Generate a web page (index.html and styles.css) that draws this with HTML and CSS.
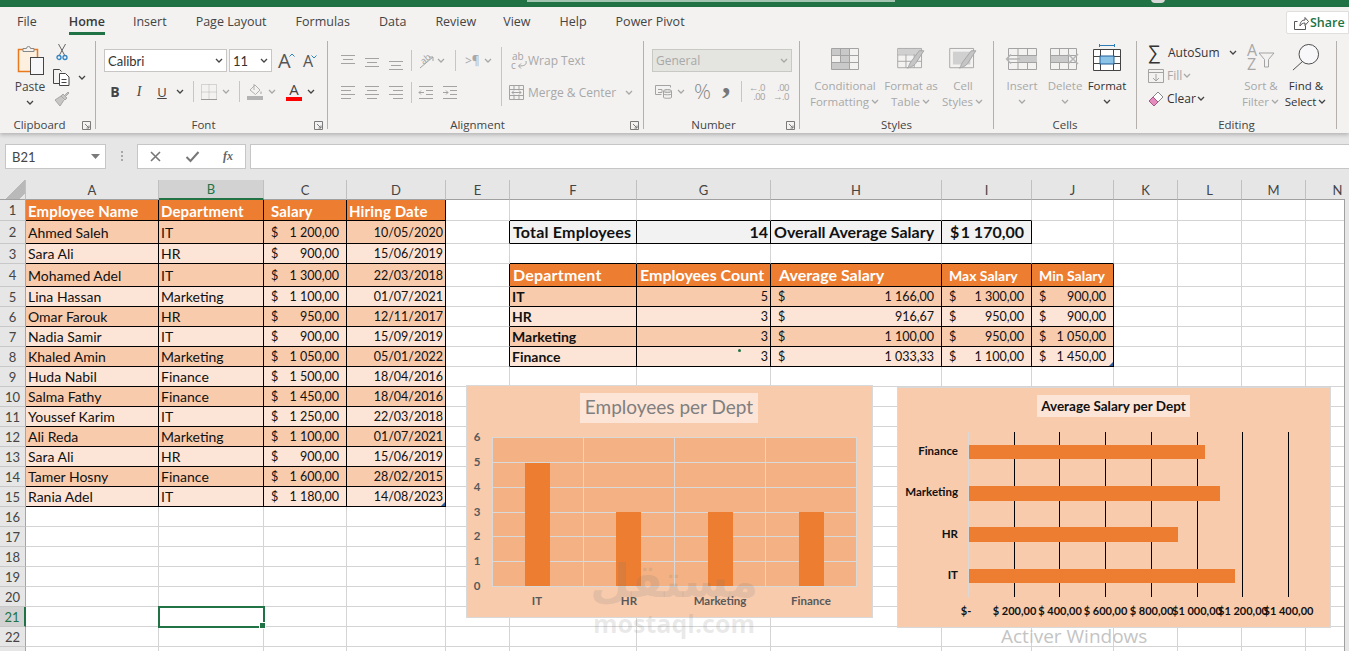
FILE: index.html
```html
<!DOCTYPE html>
<html lang="en">
<head>
<meta charset="utf-8">
<title>Employees - Excel</title>
<link rel="stylesheet" href="styles.css">
</head>
<body>
<svg class="defs" xmlns="http://www.w3.org/2000/svg">
  <symbol id="chev" viewBox="0 0 10 6"><path d="M2 1l3 3 3-3" fill="none" stroke="currentColor" stroke-width="1.3"/></symbol>
  <symbol id="launch" viewBox="0 0 9 9"><path d="M.5 8.500V.5h8v8zM3 3l4 4M7 4.500V7H4.500" fill="none" stroke="#7a7a7a" stroke-width="1"/></symbol>
  <symbol id="al-top" viewBox="0 0 16 20"><path d="M1 4.500h14M3 8.500h10M1 12.500h14" fill="none" stroke="#a3a3a3"/></symbol>
  <symbol id="al-mid" viewBox="0 0 16 20"><path d="M1 7.500h14M3 11.500h10M1 15.500h14" fill="none" stroke="#a3a3a3"/></symbol>
  <symbol id="al-bot" viewBox="0 0 16 20"><path d="M1 10.500h14M3 14.500h10M1 18.500h14" fill="none" stroke="#a3a3a3"/></symbol>
  <symbol id="al-left" viewBox="0 0 16 16"><path d="M1 1.500h14M1 5.500h10M1 9.500h14M1 13.500h10" fill="none" stroke="#a3a3a3"/></symbol>
  <symbol id="al-center" viewBox="0 0 16 16"><path d="M1 1.500h14M3 5.500h10M1 9.500h14M3 13.500h10" fill="none" stroke="#a3a3a3"/></symbol>
  <symbol id="al-right" viewBox="0 0 16 16"><path d="M1 1.500h14M5 5.500h10M1 9.500h14M5 13.500h10" fill="none" stroke="#a3a3a3"/></symbol>
  <symbol id="grid-base" viewBox="0 0 28 22"><path d="M.5.500h27v21H.5zM.5 7.500h27M.5 14.500h27M9.500.5v21M18.500.5v21" fill="none" stroke="#a3a3a3"/></symbol>
</svg>

<header class="titlebar"><div class="searchbar"></div><div class="profile"></div></header>

<section class="ribbon">
  <nav class="tabs">
    <span class="tab">File</span>
    <span class="tab active">Home</span>
    <span class="tab">Insert</span>
    <span class="tab">Page Layout</span>
    <span class="tab">Formulas</span>
    <span class="tab">Data</span>
    <span class="tab tab-rev">Review</span>
    <span class="tab">View</span>
    <span class="tab">Help</span>
    <span class="tab">Power Pivot</span>
    <button class="share">
      <svg width="16" height="16" viewBox="0 0 16 16"><path d="M1.500 6.500v8h11v-4M1.500 6.500h3M7 11c0-4 2-6 5-6V2.500l3.500 4-3.500 4V8c-2 0-4 1-5 3z" fill="none" stroke="#555"/></svg>
      <span>Share</span>
    </button>
  </nav>
  <div class="groups">

    <div class="group g-clip">
      <div class="group-body clip-body">
        <div class="paste">
          <svg width="30" height="32" viewBox="0 0 30 32"><rect x="3.500" y="5.500" width="19" height="22" fill="#fdf0de" stroke="#e8791c" stroke-width="1.500"/><path d="M8 7.500v-3h3.500a2 2 0 0 1 4 0H19v3z" fill="#f3f2f1" stroke="#8a8886"/><rect x="15.500" y="13.500" width="13" height="17" fill="#f7f6f9" stroke="#444"/></svg>
          <span class="paste-label">Paste</span>
          <svg class="chev-ico dark" width="10" height="6"><use href="#chev"/></svg>
        </div>
        <div class="clip-tools">
          <svg width="12" height="17" viewBox="0 0 12 17"><path d="M2.500 0l6 11M9.500 0l-6 11" fill="none" stroke="#666"/><circle cx="3" cy="13.500" r="2" fill="none" stroke="#2d83c4" stroke-width="1.300"/><circle cx="9" cy="13.500" r="2" fill="none" stroke="#2d83c4" stroke-width="1.300"/></svg>
          <div class="copy-row">
            <svg width="17" height="17" viewBox="0 0 17 17"><path d="M6 14.500H.5V.5h6l2 2" fill="none" stroke="#444"/><path d="M6.500 4.500h6l3.500 3.500v8.500H6.500z" fill="#fff" stroke="#444"/><path d="M8.500 10.500h5M8.500 13.500h5" stroke="#444"/></svg>
            <svg class="chev-ico dark ml7" width="10" height="6"><use href="#chev"/></svg>
          </div>
          <svg width="16" height="16" viewBox="0 0 16 16"><path d="M10 5l4-4 1 1-4 4M9 3l4 4-2 2-4-4zM7 5L1 9l5 6 4-6" fill="#c8c6c4" stroke="#a9a7a5"/></svg>
        </div>
      </div>
      <div class="group-label"><span>Clipboard</span><svg class="launcher" width="9" height="9"><use href="#launch"/></svg></div>
    </div>

    <div class="group g-font">
      <div class="group-body font-body">
        <div class="tool-row">
          <div class="select font-name"><span>Calibri</span><svg class="chev-ico dark" width="10" height="6"><use href="#chev"/></svg></div>
          <div class="select font-size"><span>11</span><svg class="chev-ico dark" width="10" height="6"><use href="#chev"/></svg></div>
          <span class="grow-a big-a ml6">A<svg width="6" height="4" viewBox="0 0 6 4"><path d="M.5 3.500L3 1l2.500 2.500" fill="none" stroke="#2d83c4"/></svg></span>
          <span class="grow-a small-a ml9">A<svg width="6" height="4" viewBox="0 0 6 4"><path d="M.5.5L3 3 5.500.5" fill="none" stroke="#2d83c4"/></svg></span>
        </div>
        <div class="tool-row row2">
          <b class="fmt ml1">B</b>
          <i class="fmt ml4">I</i>
          <u class="fmt ml3">U</u>
          <svg class="chev-ico dark ml3" width="10" height="6"><use href="#chev"/></svg>
          <span class="vsep short ml8"></span>
          <svg class="ml7" width="16" height="16" viewBox="0 0 16 16"><path d="M.5.500h15v15H.5z" fill="none" stroke="#b5b5b5" stroke-dasharray="1 1"/><path d="M.5 8h15M8 .5v15" stroke="#b5b5b5" stroke-dasharray="1 1"/><path d="M0 15.500h16" stroke="#9a9a9a"/></svg>
          <svg class="chev-ico ml4" width="10" height="6"><use href="#chev"/></svg>
          <span class="vsep short ml8"></span>
          <svg class="ml7" width="16" height="17" viewBox="0 0 16 17"><path d="M3 7l5-5 5 5-4.500 4.500z" fill="none" stroke="#b0b0b0"/><path d="M7 1v6" stroke="#b0b0b0"/><path d="M14 8c1 1.500 1 3 0 3s-1-1.500 0-3z" fill="#b0b0b0"/><rect y="13" width="16" height="4" fill="#b3b3b3"/></svg>
          <svg class="chev-ico ml4" width="10" height="6"><use href="#chev"/></svg>
          <span class="color-a ml9">A</span>
          <svg class="chev-ico dark ml4" width="10" height="6"><use href="#chev"/></svg>
        </div>
      </div>
      <div class="group-label"><span>Font</span><svg class="launcher" width="9" height="9"><use href="#launch"/></svg></div>
    </div>

    <div class="group g-align">
      <div class="group-body align-body">
        <div class="align-main">
          <div class="tool-row">
            <svg width="16" height="20"><use href="#al-top"/></svg>
            <svg class="ml8" width="16" height="20"><use href="#al-mid"/></svg>
            <svg class="ml8" width="16" height="20"><use href="#al-bot"/></svg>
            <span class="vsep short ml7"></span>
            <svg class="ml6 over" width="18" height="18" viewBox="0 0 18 18"><path d="M2 16L15 5M15 5h-4M15 5v4" fill="none" stroke="#a3a3a3"/><text x="2" y="11" class="mini-ab" transform="rotate(-40 6 7)">ab</text></svg>
            <svg class="chev-ico" width="10" height="6"><use href="#chev"/></svg>
            <span class="vsep short ml9"></span>
            <span class="rtl ml9">&gt;¶</span>
            <svg class="chev-ico ml5" width="10" height="6"><use href="#chev"/></svg>
          </div>
          <div class="tool-row row2a">
            <svg width="16" height="16"><use href="#al-left"/></svg>
            <svg class="ml8" width="16" height="16"><use href="#al-center"/></svg>
            <svg class="ml8" width="16" height="16"><use href="#al-right"/></svg>
            <span class="vsep short ml7"></span>
            <svg class="ml6" width="16" height="16" viewBox="0 0 16 16"><path d="M1 1.500h14M8 5.500h7M8 9.500h7M1 13.500h14" fill="none" stroke="#a3a3a3"/><path d="M6 7.500H1M3 5.500l-2 2 2 2" fill="none" stroke="#a3a3a3"/></svg>
            <svg class="ml8" width="16" height="16" viewBox="0 0 16 16"><path d="M1 1.500h14M8 5.500h7M8 9.500h7M1 13.500h14" fill="none" stroke="#a3a3a3"/><path d="M1 7.500h5M4 5.500l2 2-2 2" fill="none" stroke="#a3a3a3"/></svg>
          </div>
        </div>
        <span class="vsep tall ml1"></span>
        <div class="align-wrap">
          <div class="wrap-row off ml9">
            <svg class="over" width="16" height="18" viewBox="0 0 16 18"><text x="1" y="8" class="mini-wrap">ab</text><text x="0" y="17" class="mini-wrap">c</text><path d="M15 9c1 4-2 5-7 5M10 11.500L7.500 14l2.500 2.500" fill="none" stroke="#a3a3a3"/></svg><span class="wrap-text">Wrap Text</span>
          </div>
          <div class="wrap-row merge off ml7">
            <svg width="15" height="15" viewBox="0 0 15 15"><path d="M.5.500h14v14H.5zM.5 4.500h14M.5 10.500h14M5 .5v4M10 .5v4M5 10.500v4M10 10.500v4M3 7.500h9M5 5.500l-2 2 2 2M10 5.500l2 2-2 2" fill="none" stroke="#a3a3a3"/></svg>
            <span class="ml4">Merge &amp; Center</span>
            <svg class="chev-ico ml8" width="10" height="6"><use href="#chev"/></svg>
          </div>
        </div>
      </div>
      <div class="group-label"><span>Alignment</span><svg class="launcher" width="9" height="9"><use href="#launch"/></svg></div>
    </div>

    <div class="group g-num">
      <div class="group-body font-body">
        <div class="tool-row">
          <div class="select num-format"><span>General</span><svg class="chev-ico" width="10" height="6"><use href="#chev"/></svg></div>
        </div>
        <div class="tool-row row2">
          <svg class="ml3" width="17" height="15" viewBox="0 0 17 15"><path d="M.5 1.500h15v2M.5 1.500v9h6" fill="none" stroke="#a3a3a3"/><path d="M3 5.500h4v3H3" fill="none" stroke="#a3a3a3"/><ellipse cx="12.500" cy="7" rx="4" ry="1.500" fill="#ddd" stroke="#a3a3a3"/><path d="M8.500 7v6.500c0 1 8 1 8 0V7M8.500 10c0 1 8 1 8 0" fill="none" stroke="#a3a3a3"/></svg>
          <svg class="chev-ico ml4" width="10" height="6"><use href="#chev"/></svg>
          <span class="pct ml8">%</span>
          <span class="comma ml11">,</span>
          <span class="vsep short ml9"></span>
          <span class="dec ml6"><span>←.0</span><span>.00</span></span>
          <span class="dec ml7"><span>.00</span><span>→.0</span></span>
        </div>
      </div>
      <div class="group-label"><span>Number</span><svg class="launcher" width="9" height="9"><use href="#launch"/></svg></div>
    </div>

    <div class="group g-styles">
      <div class="group-body styles-body">
        <div class="big cond off">
          <svg width="28" height="22"><use href="#grid-base"/><rect x="1" y="1" width="8" height="6" fill="#c9c9c9"/><rect x="10" y="1" width="8" height="6" fill="#c9c9c9"/><rect x="10" y="8" width="8" height="6" fill="#c9c9c9"/><rect x="1" y="15" width="17" height="6" fill="#c9c9c9"/></svg>
          <span class="big-l1">Conditional</span>
          <span class="big-l2">Formatting<svg class="chev-ico" width="10" height="6"><use href="#chev"/></svg></span>
        </div>
        <div class="big fat off">
          <svg width="30" height="24" viewBox="0 0 30 24"><path d="M.5.500h26v21H.5zM.5 7.500h26M.5 14.500h26M9.500.5v21M18.500.5v21" fill="none" stroke="#a3a3a3"/><rect x="1" y="1" width="25" height="6" fill="#d0d0d0"/><path d="M24 3l5 0-9 14c-2 3-6 4-9 5 2-2 2-5 4-7z" fill="#c5c5c5" stroke="#a3a3a3"/></svg>
          <span class="big-l1">Format as</span>
          <span class="big-l2">Table<svg class="chev-ico" width="10" height="6"><use href="#chev"/></svg></span>
        </div>
        <div class="big cellst off">
          <svg width="30" height="24" viewBox="0 0 30 24"><path d="M.5.500h26v21H.5z" fill="none" stroke="#a3a3a3"/><rect x="4" y="4" width="19" height="14" fill="#d0d0d0"/><path d="M24 3l5 0-9 14c-2 3-6 4-9 5 2-2 2-5 4-7z" fill="#c5c5c5" stroke="#a3a3a3"/></svg>
          <span class="big-l1">Cell</span>
          <span class="big-l2">Styles<svg class="chev-ico" width="10" height="6"><use href="#chev"/></svg></span>
        </div>
      </div>
      <div class="group-label"><span>Styles</span></div>
    </div>

    <div class="group g-cells">
      <div class="group-body cells-body">
        <div class="big cell-btn off">
          <svg width="32" height="22" viewBox="0 0 32 22"><path d="M2.500.5h28v21h-28zM2.500 7.500h28M2.500 14.500h28M12 .5v21M21.500.5v21" fill="none" stroke="#a3a3a3"/><rect x="13" y="8" width="18" height="6" fill="#c9c9c9"/><path d="M14 11H1M5 6.500L.5 11 5 15.500" fill="none" stroke="#b5b5b5" stroke-width="1.500"/></svg>
          <span class="big-l1">Insert</span>
          <svg class="chev-ico big-l2" width="10" height="6"><use href="#chev"/></svg>
        </div>
        <div class="big cell-btn off">
          <svg width="30" height="22" viewBox="0 0 30 22"><path d="M.5.500h26v21H.5zM.5 7.500h26M.5 14.500h26M9.500.5v21M18.500.5v21" fill="none" stroke="#a3a3a3"/><rect x="1" y="8" width="17" height="6" fill="#c9c9c9"/><path d="M18 6l10 10M28 6L18 16" stroke="#b5b5b5" stroke-width="1.500"/></svg>
          <span class="big-l1">Delete</span>
          <svg class="chev-ico big-l2" width="10" height="6"><use href="#chev"/></svg>
        </div>
        <div class="big cell-btn fmt-btn">
          <svg class="fmt-svg" width="28" height="27" viewBox="0 0 28 27"><path d="M6.500 1.500h15M6.500 0v3M21.500 0v3" fill="none" stroke="#2d7cb8"/><path d="M.5 5.500h27v21H.5zM.5 12.500h27M.5 19.500h27M7.500 5.500v21M20.500 5.500v21" fill="#fff" stroke="#444"/><rect x="7" y="12" width="14" height="8" fill="#8cc4e8" stroke="#1f5f99"/></svg>
          <span class="big-l1">Format</span>
          <svg class="chev-ico dark big-l2" width="10" height="6"><use href="#chev"/></svg>
        </div>
      </div>
      <div class="group-label"><span>Cells</span></div>
    </div>

    <div class="group g-edit">
      <div class="group-body edit-body">
        <div class="edit-col">
          <div class="edit-row">
            <span class="sigma">∑</span><span class="ml5">AutoSum</span>
            <svg class="chev-ico dark ml8" width="10" height="6"><use href="#chev"/></svg>
          </div>
          <div class="edit-row off">
            <svg width="16" height="14" viewBox="0 0 16 14"><path d="M.5.500h15v13H.5zM.5 3.500h15M8 5v7M5 9l3 3 3-3" fill="none" stroke="#a3a3a3"/></svg>
            <span class="ml3">Fill</span>
            <svg class="chev-ico" width="10" height="6"><use href="#chev"/></svg>
          </div>
          <div class="edit-row">
            <svg width="16" height="16" viewBox="0 0 16 16"><path d="M1 10l9-9 5 5-9 9z" fill="#fff" stroke="#888"/><path d="M1 10l4-4 5 5-4 4z" fill="#e58bbb" stroke="#a7568a"/></svg>
            <span class="ml3">Clear</span>
            <svg class="chev-ico dark" width="10" height="6"><use href="#chev"/></svg>
          </div>
        </div>
        <div class="big sort off">
          <svg class="tall-ico" width="28" height="27" viewBox="0 0 28 27"><text x="0" y="12" class="az">A</text><text x="0" y="26" class="az">Z</text><path d="M12 9h15l-5.500 6.500V23h-4v-7.500z" fill="none" stroke="#a3a3a3"/></svg>
          <span class="big-l1">Sort &amp;</span>
          <span class="big-l2">Filter<svg class="chev-ico" width="10" height="6"><use href="#chev"/></svg></span>
        </div>
        <div class="big find">
          <svg class="tall-ico" width="30" height="27" viewBox="0 0 30 29"><circle cx="18" cy="11" r="10.500" fill="#f8f8fa" stroke="#444"/><path d="M11 19L1 28" stroke="#444"/></svg>
          <span class="big-l1">Find &amp;</span>
          <span class="big-l2">Select<svg class="chev-ico dark" width="10" height="6"><use href="#chev"/></svg></span>
        </div>
      </div>
      <div class="group-label"><span>Editing</span></div>
    </div>
  </div>
</section>

<section class="formula-bar">
  <div class="name-box"><span>B21</span><svg width="9" height="5" viewBox="0 0 9 5"><path d="M0 0h9L4.500 5z" fill="#7a7a7a"/></svg></div>
  <span class="dots"></span>
  <div class="fx-box">
    <svg width="13" height="13" viewBox="0 0 13 13"><path d="M2 2l9 9M11 2l-9 9" stroke="#777" stroke-width="1.600"/></svg>
    <svg width="15" height="12" viewBox="0 0 15 12"><path d="M1.500 6l4 4 8-9" fill="none" stroke="#777" stroke-width="2"/></svg>
    <span class="fx">fx</span>
  </div>
  <div class="fx-input"></div>
</section>

<main class="sheet-wrap">
  <div class="sheet">
    <table class="grid">
      <colgroup><col class="c-h"><col class="c-a"><col class="c-b"><col class="c-c"><col class="c-d"><col class="c-e"><col class="c-f"><col class="c-g"><col class="c-h2"><col class="c-i"><col class="c-j"><col class="c-k"><col class="c-k"><col class="c-k"><col class="c-k"></colgroup>
      <thead><tr><th class="corner"></th><th>A</th><th class="sel-col">B</th><th>C</th><th>D</th><th>E</th><th>F</th><th>G</th><th>H</th><th>I</th><th>J</th><th>K</th><th>L</th><th>M</th><th>N</th></tr></thead>
      <tbody>
        <tr class="r21"><th>1</th><td class="hd">Employee Name</td><td class="hd">Department</td><td class="hd pad7">Salary</td><td class="hd">Hiring Date</td><td></td><td class="bb"></td><td class="bb"></td><td class="bb"></td><td class="bb"></td><td></td><td></td><td></td><td></td><td></td></tr>
        <tr class="r23"><th>2</th><td class="dk b">Ahmed Saleh</td><td class="dk b">IT</td><td class="dk b"><div class="money"><span>$</span><span>1 200,00</span></div></td><td class="dk b num">10/05/2020</td><td class="br"></td><td class="tot b tot-first">Total Employees</td><td class="tot b num">14</td><td class="tot b">Overall Average Salary</td><td class="tot b total-val"><div class="money"><span>$</span><span>1 170,00</span></div></td><td></td><td></td><td></td><td></td><td></td></tr>
        <tr><th>3</th><td class="lt b">Sara Ali</td><td class="lt b">HR</td><td class="lt b"><div class="money"><span>$</span><span>900,00</span></div></td><td class="lt b num">15/06/2019</td><td></td><td class="bb"></td><td class="bb"></td><td class="bb"></td><td class="bb"></td><td class="bb"></td><td></td><td></td><td></td><td></td></tr>
        <tr class="r23"><th>4</th><td class="dk b">Mohamed Adel</td><td class="dk b">IT</td><td class="dk b"><div class="money"><span>$</span><span>1 300,00</span></div></td><td class="dk b num">22/03/2018</td><td class="br"></td><td class="hd big-hd hd-dept">Department</td><td class="hd big-hd">Employees Count</td><td class="hd big-hd pad8">Average Salary</td><td class="hd pad7 small-hd">Max Salary</td><td class="hd pad7 small-hd">Min Salary</td><td></td><td></td><td></td><td></td></tr>
        <tr><th>5</th><td class="lt b">Lina Hassan</td><td class="lt b">Marketing</td><td class="lt b"><div class="money"><span>$</span><span>1 100,00</span></div></td><td class="lt b num">01/07/2021</td><td class="br"></td><td class="dk b strong">IT</td><td class="dk b num">5</td><td class="dk b"><div class="money"><span>$</span><span>1 166,00</span></div></td><td class="dk b"><div class="money"><span>$</span><span>1 300,00</span></div></td><td class="dk b"><div class="money"><span>$</span><span>900,00</span></div></td><td></td><td></td><td></td><td></td></tr>
        <tr><th>6</th><td class="dk b">Omar Farouk</td><td class="dk b">HR</td><td class="dk b"><div class="money"><span>$</span><span>950,00</span></div></td><td class="dk b num">12/11/2017</td><td class="br"></td><td class="lt b strong">HR</td><td class="lt b num">3</td><td class="lt b"><div class="money"><span>$</span><span>916,67</span></div></td><td class="lt b"><div class="money"><span>$</span><span>950,00</span></div></td><td class="lt b"><div class="money"><span>$</span><span>900,00</span></div></td><td></td><td></td><td></td><td></td></tr>
        <tr><th>7</th><td class="lt b">Nadia Samir</td><td class="lt b">IT</td><td class="lt b"><div class="money"><span>$</span><span>900,00</span></div></td><td class="lt b num">15/09/2019</td><td class="br"></td><td class="dk b strong">Marketing</td><td class="dk b num">3</td><td class="dk b"><div class="money"><span>$</span><span>1 100,00</span></div></td><td class="dk b"><div class="money"><span>$</span><span>950,00</span></div></td><td class="dk b"><div class="money"><span>$</span><span>1 050,00</span></div></td><td></td><td></td><td></td><td></td></tr>
        <tr><th>8</th><td class="dk b">Khaled Amin</td><td class="dk b">Marketing</td><td class="dk b"><div class="money"><span>$</span><span>1 050,00</span></div></td><td class="dk b num">05/01/2022</td><td class="br"></td><td class="lt b strong">Finance</td><td class="lt b num dot-cell">3</td><td class="lt b"><div class="money"><span>$</span><span>1 033,33</span></div></td><td class="lt b"><div class="money"><span>$</span><span>1 100,00</span></div></td><td class="lt b corner-mark"><div class="money"><span>$</span><span>1 450,00</span></div></td><td></td><td></td><td></td><td></td></tr>
        <tr><th>9</th><td class="lt b">Huda Nabil</td><td class="lt b">Finance</td><td class="lt b"><div class="money"><span>$</span><span>1 500,00</span></div></td><td class="lt b num">18/04/2016</td><td></td><td></td><td></td><td></td><td></td><td></td><td></td><td></td><td></td><td></td></tr>
        <tr><th>10</th><td class="dk b">Salma Fathy</td><td class="dk b">Finance</td><td class="dk b"><div class="money"><span>$</span><span>1 450,00</span></div></td><td class="dk b num">18/04/2016</td><td></td><td></td><td></td><td></td><td></td><td></td><td></td><td></td><td></td><td></td></tr>
        <tr><th>11</th><td class="lt b">Youssef Karim</td><td class="lt b">IT</td><td class="lt b"><div class="money"><span>$</span><span>1 250,00</span></div></td><td class="lt b num">22/03/2018</td><td></td><td></td><td></td><td></td><td></td><td></td><td></td><td></td><td></td><td></td></tr>
        <tr><th>12</th><td class="dk b">Ali Reda</td><td class="dk b">Marketing</td><td class="dk b"><div class="money"><span>$</span><span>1 100,00</span></div></td><td class="dk b num">01/07/2021</td><td></td><td></td><td></td><td></td><td></td><td></td><td></td><td></td><td></td><td></td></tr>
        <tr><th>13</th><td class="lt b">Sara Ali</td><td class="lt b">HR</td><td class="lt b"><div class="money"><span>$</span><span>900,00</span></div></td><td class="lt b num">15/06/2019</td><td></td><td></td><td></td><td></td><td></td><td></td><td></td><td></td><td></td><td></td></tr>
        <tr><th>14</th><td class="dk b">Tamer Hosny</td><td class="dk b">Finance</td><td class="dk b"><div class="money"><span>$</span><span>1 600,00</span></div></td><td class="dk b num">28/02/2015</td><td></td><td></td><td></td><td></td><td></td><td></td><td></td><td></td><td></td><td></td></tr>
        <tr><th>15</th><td class="lt b">Rania Adel</td><td class="lt b">IT</td><td class="lt b"><div class="money"><span>$</span><span>1 180,00</span></div></td><td class="lt b num corner-mark">14/08/2023</td><td></td><td></td><td></td><td></td><td></td><td></td><td></td><td></td><td></td><td></td></tr>
        <tr><th>16</th><td></td><td></td><td></td><td></td><td></td><td></td><td></td><td></td><td></td><td></td><td></td><td></td><td></td><td></td></tr>
        <tr><th>17</th><td></td><td></td><td></td><td></td><td></td><td></td><td></td><td></td><td></td><td></td><td></td><td></td><td></td><td></td></tr>
        <tr><th>18</th><td></td><td></td><td></td><td></td><td></td><td></td><td></td><td></td><td></td><td></td><td></td><td></td><td></td><td></td></tr>
        <tr><th>19</th><td></td><td></td><td></td><td></td><td></td><td></td><td></td><td></td><td></td><td></td><td></td><td></td><td></td><td></td></tr>
        <tr><th>20</th><td></td><td></td><td></td><td></td><td></td><td></td><td></td><td></td><td></td><td></td><td></td><td></td><td></td><td></td></tr>
        <tr><th class="sel-row">21</th><td></td><td class="active-cell"></td><td></td><td></td><td></td><td></td><td></td><td></td><td></td><td></td><td></td><td></td><td></td><td></td></tr>
        <tr><th>22</th><td></td><td></td><td></td><td></td><td></td><td></td><td></td><td></td><td></td><td></td><td></td><td></td><td></td><td></td></tr>
        <tr><th></th><td></td><td></td><td></td><td></td><td></td><td></td><td></td><td></td><td></td><td></td><td></td><td></td><td></td><td></td></tr>
      </tbody>
    </table>

    <figure class="chart chart-emp">
      <svg width="407" height="233" viewBox="0 0 407 233">
        <rect class="title-bg" x="114" y="8" width="178" height="30"/>
        <text class="title-emp" x="203" y="29" text-anchor="middle">Employees per Dept</text>
        <rect class="plot" x="26" y="52" width="365" height="149"/>
        <path class="gridline" d="M26 52.500h365M26 77.500h365M26 102.500h365M26 127.500h365M26 151.500h365M26 176.500h365M26 201.500h365M26.500 52v149M117.500 52v149M208.500 52v149M299.500 52v149M390.500 52v149"/>
        <rect class="bar" x="59" y="78" width="25" height="123"/>
        <rect class="bar" x="150" y="127" width="25" height="74"/>
        <rect class="bar" x="242" y="127" width="25" height="74"/>
        <rect class="bar" x="333" y="127" width="25" height="74"/>
        <g class="axis-emp" text-anchor="middle">
          <text x="11" y="56">6</text><text x="11" y="81">5</text><text x="11" y="106">4</text><text x="11" y="131">3</text><text x="11" y="155">2</text><text x="11" y="180">1</text><text x="11" y="205">0</text>
          <text x="71" y="220">IT</text><text x="163" y="220">HR</text><text x="254" y="220">Marketing</text><text x="345" y="220">Finance</text>
        </g>
      </svg>
    </figure>

    <figure class="chart chart-sal">
      <svg width="434" height="241" viewBox="0 0 434 241">
        <rect class="title-bg" x="140" y="8" width="153" height="22"/>
        <text class="title-sal" x="216.500" y="24" text-anchor="middle">Average Salary per Dept</text>
        <path class="blackline" d="M117.500 45v165M162.500 45v165M208.500 45v165M254.500 45v165M300.500 45v165M345.500 45v165M391.500 45v165"/>
        <path class="gridline" d="M71.500 45v165"/>
        <rect class="bar" x="72" y="58" width="236" height="14"/>
        <rect class="bar" x="72" y="99" width="251" height="15"/>
        <rect class="bar" x="72" y="140" width="209" height="15"/>
        <rect class="bar" x="72" y="182" width="266" height="14"/>
        <g class="axis-sal" text-anchor="end">
          <text x="61" y="68">Finance</text><text x="61" y="109">Marketing</text><text x="61" y="151">HR</text><text x="61" y="192">IT</text>
        </g>
        <g class="axis-sal axis-money" text-anchor="middle">
          <text x="69" y="228">$-</text><text x="117.500" y="228">$ 200,00</text><text x="163" y="228">$ 400,00</text><text x="208.500" y="228">$ 600,00</text><text x="254.500" y="228">$ 800,00</text><text x="300" y="228">$1 000,00</text><text x="346" y="228">$1 200,00</text><text x="391.500" y="228">$1 400,00</text>
        </g>
      </svg>
    </figure>

    <div class="watermark" lang="ar"><span class="wm-ar" dir="rtl">مستقل</span><span class="wm-en">mostaql.com</span></div>
    <div class="activate">Activer Windows</div>
  </div>
</main>
</body>
</html>
```

FILE: styles.css
```css
* { box-sizing: border-box; }
html, body { margin: 0; padding: 0; width: 1349px; height: 651px; overflow: hidden; }
body { font-family: "Open Sans", "Noto Sans", sans-serif; font-size: 12px; color: #444; background: #e6e6e6; display: flex; flex-direction: column; }
.defs { display: none; }
.over { overflow: visible; flex: none; }

.titlebar { height: 7px; background: #217346; display: flex; flex: none; overflow: hidden; }
.searchbar { width: 368px; height: 2px; margin-left: 527px; background: #a3c4b1; }
.profile { width: 14px; height: 4px; margin-left: 256px; margin-top: -1px; background: #d8d8d8; border-radius: 0 0 7px 7px; }

.ribbon { height: 126px; flex: none; background: #f3f2f1; box-shadow: 0 2px 4px rgba(0,0,0,.22); position: relative; }
.tabs { height: 34px; display: flex; align-items: flex-start; padding-left: 17px; font-size: 12.500px; }
.tab { margin-right: 29px; padding-top: 6px; height: 28px; line-height: 18px; position: relative; }
.tab.active { font-weight: 600; color: #3a3a3a; border-bottom: 3px solid #217346; margin-right: 28px; margin-left: 3px; }
.tab.tab-rev { margin-right: 27px; }
.share { position: absolute; right: 0; top: 4px; width: 63px; height: 23px; display: flex; align-items: center; gap: 1px; padding: 0 0 0 6px; background: #fff; border: 1px solid #e1dfdd; border-radius: 2px 0 0 2px; color: #217346; font: 600 12.500px "Open Sans", sans-serif; }

.groups { display: flex; height: 88px; }
.group { display: flex; flex-direction: column; flex: none; border-right: 1px solid #b3b0ad; height: 88px; }
.g-clip { width: 96px; }
.g-font { width: 232px; }
.g-align { width: 316px; }
.g-num { width: 156px; }
.g-styles { width: 194px; }
.g-cells { width: 143px; }
.g-edit { width: 200px; }
.group-body { height: 76px; flex: none; display: flex; }
.group-label { height: 12px; display: flex; line-height: 16px; font-size: 11.500px; color: #444; }
.group-label > span { flex: 1; text-align: center; }
.launcher { width: 9px; height: 9px; margin: 4px 4px 0 3px; flex: none; }

.off { color: #a8a8a8; }
.chev-ico { color: #a8a8a8; flex: none; display: block; }
.chev-ico.dark { color: #444; }
.ml1 { margin-left: 1px; } .ml3 { margin-left: 3px; } .ml4 { margin-left: 4px; } .ml5 { margin-left: 5px; } .ml6 { margin-left: 6px; } .ml7 { margin-left: 7px; } .ml8 { margin-left: 8px; } .ml9 { margin-left: 9px; } .ml11 { margin-left: 11px; }

.clip-body { padding-left: 15px; }
.paste { width: 30px; display: flex; flex-direction: column; align-items: center; padding-top: 3px; }
.paste-label { font-size: 12px; line-height: 16px; margin-top: 3px; }
.paste .chev-ico { margin-top: 5px; }
.clip-tools { display: flex; flex-direction: column; margin-left: 8px; padding-top: 3px; align-items: flex-start; }
.clip-tools > svg:first-child { margin-left: 3px; }
.copy-row { display: flex; align-items: center; margin-top: 8px; }
.clip-tools > svg:last-child { margin-left: 1px; margin-top: 5px; }

.font-body { flex-direction: column; padding: 8px 0 0 8px; }
.tool-row { display: flex; align-items: center; height: 23px; flex: none; }
.row2 { margin-top: 8px; }
.select { height: 23px; background: #fff; border: 1px solid #c8c6c4; display: flex; align-items: center; justify-content: space-between; padding: 0 2px 0 3px; font: 13px "Lato", sans-serif; color: #333; }
.font-name { width: 123px; }
.font-size { width: 43px; margin-left: 2px; }
.grow-a { display: flex; color: #555; width: 16px; font-family: "Open Sans", sans-serif; line-height: 1; }
.big-a { font-size: 20px; }
.small-a { font-size: 16px; }
.grow-a svg { flex: none; margin-left: -2px; margin-top: 2px; }
.fmt { width: 20px; text-align: center; font: 14px "Liberation Serif", serif; color: #444; }
b.fmt { font: 700 14px "Open Sans", sans-serif; }
i.fmt { font: italic 14px "Liberation Serif", serif; }
u.fmt { font: 13px "Open Sans", sans-serif; }
.vsep { width: 1px; background: #c8c6c4; flex: none; display: block; }
.vsep.short { height: 21px; }
.vsep.tall { height: 59px; margin-top: -2px; }
.color-a { width: 16px; height: 19px; text-align: center; font-size: 15px; line-height: 15px; border-bottom: 4px solid #f00; color: #444; }

.align-body { padding: 8px 0 0 12px; }
.align-main { width: 160px; flex: none; }
.align-main .row2a { margin-top: 9px; }
.mini-ab { font-size: 9px; fill: #a3a3a3; }
.mini-wrap { font-size: 10px; fill: #a3a3a3; }
.rtl { width: 13px; font-size: 12px; color: #a8a8a8; }
.align-wrap { display: flex; flex-direction: column; }
.wrap-row { height: 23px; display: flex; align-items: center; font-size: 12px; }
.merge { margin-top: 9px; }
.wrap-text { margin-left: 1px; }

.num-format { width: 140px; background: #e4e4e0; color: #a8a8a8; font: 12px "Open Sans", sans-serif; border-color: #c8c8c4; }
.pct { width: 17px; font-size: 21px; font-weight: 300; line-height: 1; color: #888; text-align: center; }
.comma { width: 10px; font: 700 34px "Liberation Serif", serif; line-height: 2px; height: 22px; color: #777; }
.dec { width: 17px; display: flex; flex-direction: column; font-size: 9.500px; line-height: 9px; color: #a3a3a3; letter-spacing: -.5px; text-align: right; white-space: nowrap; }

.styles-body { padding-left: 6px; }
.big { display: flex; flex-direction: column; align-items: center; padding-top: 7px; flex: none; font-size: 11.500px; line-height: 16px; }
.big > svg:first-child { height: 22px; flex: none; margin-bottom: 8px; overflow: visible; }
.big-l1, .big-l2 { display: flex; align-items: center; white-space: nowrap; height: 16px; }
.big-l2 .chev-ico { margin-left: 1px; }
svg.big-l2 { height: 6px; margin-top: 5px; }
.cond { width: 78px; }
.fat { width: 52px; margin-left: 1px; }
.cellst { width: 44px; margin-left: 4px; }
.cells-body { padding-left: 7px; }
.cell-btn { width: 42px; }
.cell-btn + .cell-btn { margin-left: 1px; }
.cell-btn.fmt-btn { margin-left: 0; color: #333; padding-top: 3px; }
.big > svg.fmt-svg { height: 27px; margin-bottom: 7px; }
.edit-body { padding-left: 11px; }
.edit-col { width: 90px; flex: none; }
.edit-row { height: 23px; display: flex; align-items: center; font-size: 12px; color: #333; }
.edit-row.off { color: #a8a8a8; }
.sigma { font-size: 19px; width: 15px; line-height: 1; }
.sort { width: 46px; padding-top: 3px; }
.find { width: 44px; padding-top: 3px; color: #333; }
.big > svg.tall-ico { height: 27px; margin-bottom: 7px; overflow: visible; }
.az { font-size: 16px; fill: #a8a8a8; }

.formula-bar { height: 47px; flex: none; display: flex; padding: 11px 0 0 5px; background: #e6e6e6; }
.name-box { width: 101px; height: 25px; background: #fff; border: 1px solid #c6c6c6; display: flex; align-items: center; justify-content: space-between; padding: 0 5px 0 6px; font: 13px "Lato", sans-serif; color: #444; }
.dots { width: 2px; height: 11px; margin: 7px 14px 0 15px; background: repeating-linear-gradient(#a8a8a8 0 2px, transparent 2px 4px); }
.fx-box { width: 109px; height: 25px; background: #fff; border: 1px solid #c6c6c6; display: flex; align-items: center; gap: 23px; padding-left: 11px; }
.fx { font: italic 700 12px "Liberation Serif", serif; color: #666; }
.fx-input { flex: 1; height: 25px; margin-left: 4px; background: #fff; border: 1px solid #c6c6c6; border-right: 0; }

.sheet-wrap { flex: 1; overflow: hidden; background: #e6e6e6; }
.sheet { width: 1345px; height: 471px; overflow: hidden; position: relative; background: #fff; }
.sheet::after { content: ""; position: absolute; right: 0; top: 19px; bottom: 0; width: 1px; background: #a0a0a0; }
.grid { border-collapse: separate; border-spacing: 0; table-layout: fixed; width: 1370px; font-family: "Lato", sans-serif; font-size: 14px; color: #111; }
.c-h { width: 26px; } .c-a { width: 133px; } .c-b { width: 105px; } .c-c { width: 83px; } .c-d { width: 99px; } .c-e { width: 64px; } .c-f { width: 127px; } .c-g { width: 134px; } .c-h2 { width: 171px; } .c-i { width: 90px; } .c-j { width: 82px; } .c-k { width: 64px; }
.grid tr { height: 20px; }
.grid tr.r21 { height: 21px; }
.grid tr.r23 { height: 23px; }
.grid th { background: #e6e6e6; font-weight: 400; color: #444; padding: 0; border-right: 1px solid #c0c0c0; border-bottom: 1px solid #c8c8c8; font-size: 13px; overflow: hidden; }
.grid tbody th { border-right: 1px solid #a6a6a6; }
.grid thead th { border-bottom: 1px solid #a0a0a0; }
.grid .sel-col { background: #d2d2d2; color: #217346; border-bottom: 2px solid #217346; }
.grid .sel-row { background: #d2d2d2; color: #217346; border-right: 2px solid #217346; }
.grid th.corner { background: linear-gradient(135deg, #e6e6e6 56%, #b9b9b9 56%, #b9b9b9 88%, #e6e6e6 88%); }
.grid td { border-right: 1px solid #d4d4d4; border-bottom: 1px solid #d4d4d4; padding: 0 2px; vertical-align: bottom; white-space: nowrap; overflow: hidden; line-height: 18px; position: relative; }
.grid tr.r23 td { padding-bottom: 1px; }
.grid td.b { border-right-color: #000; border-bottom-color: #000; }
.grid td.br { border-right-color: #000; }
.grid td.bb { border-bottom-color: #000; }
.grid td.hd { background: #ed7d31; color: #fff; font-weight: 700; font-size: 15px; border-right-color: #000; border-bottom-color: #000; letter-spacing: .15px; }
.dk { background: #f8cbad; }
.lt { background: #fce4d6; }
.grid td.tot { background: #f2f2f2; font-weight: 700; font-size: 16px; line-height: 21px; padding: 0 3px; }
.grid td.tot-first { letter-spacing: .2px; }
.grid td.big-hd { font-size: 16px; line-height: 21px; padding: 0 3px; letter-spacing: 0; }
.grid td.hd-dept { letter-spacing: .2px; }
.grid td.small-hd { font-size: 14px; letter-spacing: 0; }
.grid td.pad7 { padding-left: 7px; }
.grid td.pad8 { padding-left: 8px; }
.grid td.strong { font-weight: 700; }
.grid td.num { text-align: right; padding-right: 2px; font-size: 12.500px; }
.grid td.tot.num { font-size: 16px; }
.money { display: flex; justify-content: space-between; padding: 0 5px; font-size: 12.500px; }
.total-val .money { padding: 0 4px 0 5px; font-size: 16px; }
.corner-mark::after { content: ""; position: absolute; right: 0; bottom: 0; border: 2px solid transparent; border-right-color: #2e5f9e; border-bottom-color: #2e5f9e; }
.dot-cell::before { content: ""; position: absolute; left: 101px; top: 2px; width: 3px; height: 3px; background: #217346; border-radius: 50%; }
.grid td.active-cell { outline: 2px solid #217346; outline-offset: -1px; overflow: visible; z-index: 1; }
.active-cell::after { content: ""; position: absolute; right: -3px; bottom: -3px; width: 5px; height: 5px; background: #217346; border: 1px solid #fff; }

.chart { position: absolute; margin: 0; border: 1px solid #d9d9d9; background: #f8cbad; }
.chart svg { display: block; position: absolute; left: -1px; top: -1px; }
.chart-emp { left: 466px; top: 205px; width: 407px; height: 233px; }
.chart-sal { left: 897px; top: 207px; width: 434px; height: 241px; }
.title-bg { fill: #fce4d6; }
.title-emp { font: 19px "Lato", sans-serif; fill: #7f7f7f; }
.title-sal { font: 700 13.500px "Lato", sans-serif; fill: #111; }
.plot { fill: #f4b183; }
.gridline { stroke: #d9d9d9; fill: none; }
.blackline { stroke: #000; fill: none; }
.bar { fill: #ed7d31; }
.axis-emp { font: 700 11.500px "Lato", sans-serif; fill: #595959; }
.axis-sal { font: 700 11.500px "Lato", sans-serif; fill: #111; }
.axis-money { font-size: 11px; }

.watermark { position: absolute; left: 592px; top: 375px; width: 164px; display: flex; flex-direction: column; align-items: center; color: rgba(120, 120, 120, .16); pointer-events: none; }
.wm-ar { font: 700 46px/52px "DejaVu Sans", sans-serif; }
.wm-en { font: 700 25px/28px "Open Sans", sans-serif; margin-top: 2px; }
.activate { position: absolute; left: 1001px; top: 443px; font: 19px/26px "Open Sans", sans-serif; color: #c4c4c4; }
```
